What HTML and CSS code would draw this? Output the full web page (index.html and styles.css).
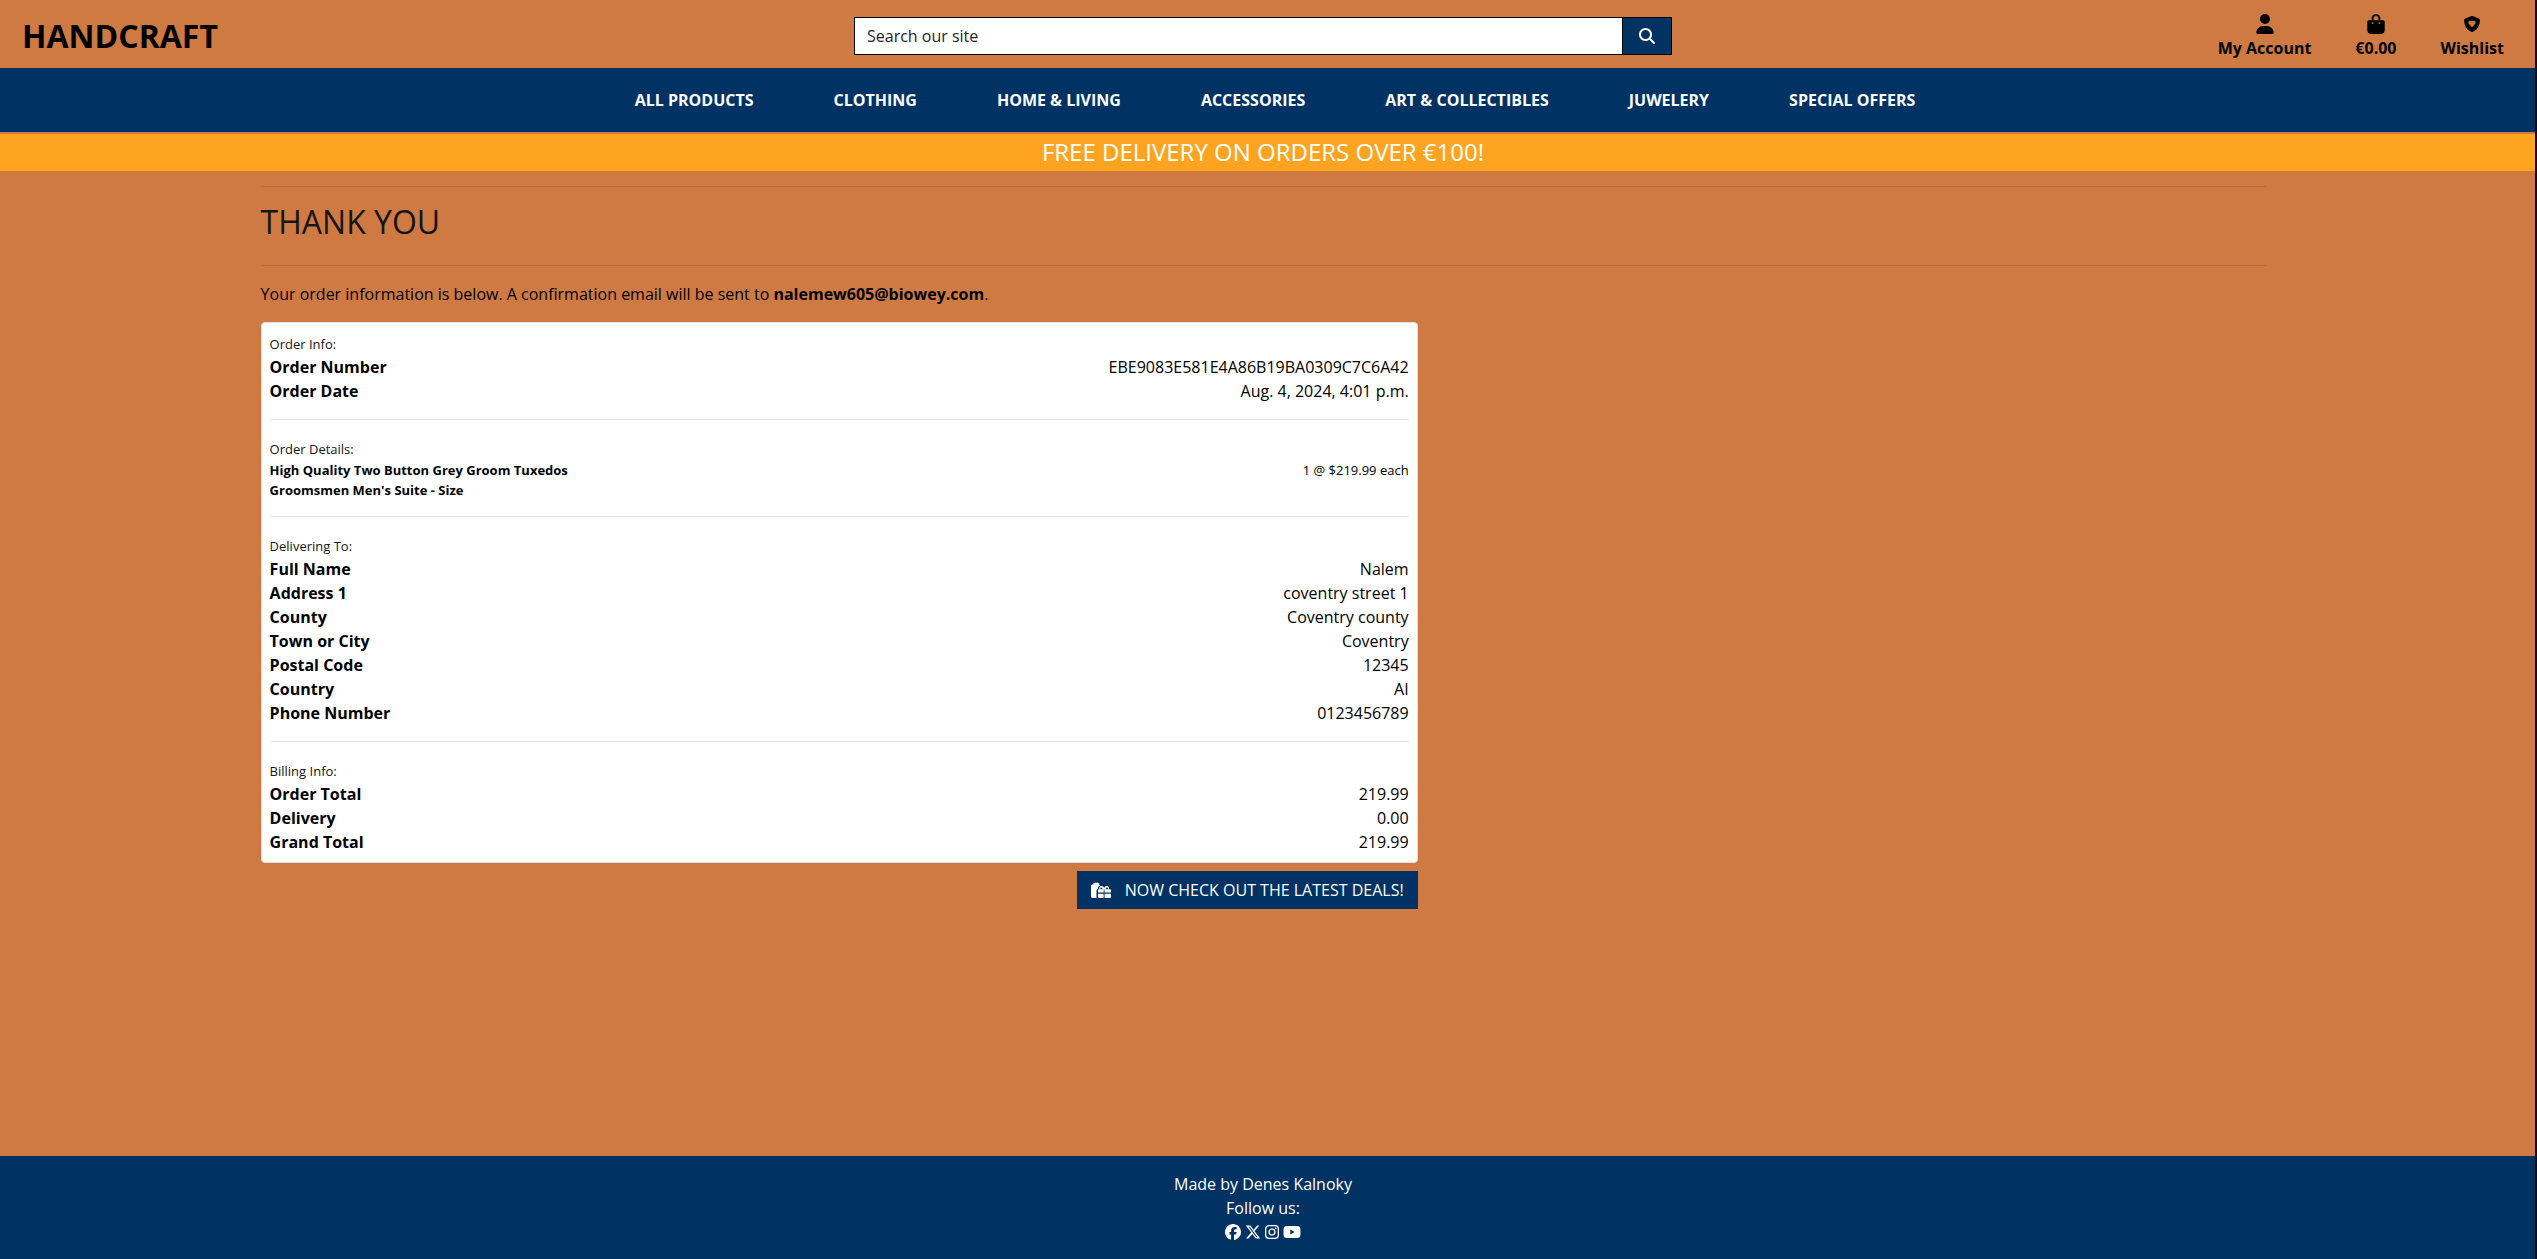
FILE: index.html
```html
<!DOCTYPE html>
<html lang="en">
<head>
<meta charset="utf-8">
<meta name="viewport" content="width=device-width, initial-scale=1">
<title>Handcraft - Thank you</title>
<link rel="stylesheet" href="styles.css">
</head>
<body>
<header class="topbar">
  <a class="brand" href="#">HANDCRAFT</a>
  <form class="search" role="search">
    <input class="search-input" type="search" placeholder="Search our site" aria-label="Search our site">
    <button class="search-button" type="submit" aria-label="Search">
      <svg class="icon" viewBox="0 0 512 512" width="16" height="16"><path d="M416 208c0 45.900-14.900 88.300-40 122.700L502.600 457.400c12.500 12.500 12.500 32.800 0 45.300s-32.800 12.500-45.300 0L330.700 376c-34.400 25.200-76.800 40-122.700 40C93.100 416 0 322.900 0 208S93.100 0 208 0S416 93.100 416 208zM208 352a144 144 0 1 0 0-288 144 144 0 1 0 0 288z"/></svg>
    </button>
  </form>
  <ul class="account">
    <li><a class="account-link" href="#">
      <svg class="icon" viewBox="0 0 448 512" width="18" height="20"><path d="M224 256A128 128 0 1 0 224 0a128 128 0 1 0 0 256zm-45.700 48C79.800 304 0 383.800 0 482.300C0 498.700 13.300 512 29.700 512H418.300c16.400 0 29.700-13.300 29.700-29.700C448 383.800 368.200 304 269.700 304H178.300z"/></svg>
      <span>My Account</span></a></li>
    <li><a class="account-link" href="#">
      <svg class="icon" viewBox="0 0 448 512" width="18" height="20"><path d="M160 112c0-35.300 28.700-64 64-64s64 28.700 64 64v48H160V112zm-48 48H48c-26.500 0-48 21.500-48 48V416c0 53 43 96 96 96H352c53 0 96-43 96-96V208c0-26.500-21.500-48-48-48H336V112C336 50.100 285.900 0 224 0S112 50.100 112 112v48zm24 48a24 24 0 1 1 0 48 24 24 0 1 1 0-48zm152 24a24 24 0 1 1 48 0 24 24 0 1 1 -48 0z"/></svg>
      <span>€0.00</span></a></li>
    <li><a class="account-link" href="#">
      <svg class="icon" viewBox="0 0 20 20" width="20" height="20"><path fill-rule="evenodd" d="M10 2c.4 0 .7.100 1 .3l5.700 2.200c.7.300 1.200.9 1.200 1.700-.1 4.500-2 9.300-6.900 11.600-.6.300-1.400.3-2 0C4.100 15.500 2.200 10.700 2.100 6.200c0-.8.500-1.400 1.200-1.700L9 2.300c.3-.2.600-.3 1-.3zM10 13.200l3-3.100c.9-.9.800-2.400-.2-3.100-.8-.6-1.900-.4-2.500.3l-.3.300-.3-.3C9.100 6.600 8 6.400 7.200 7c-1 .7-1.100 2.200-.2 3.100z"/></svg>
      <span>Wishlist</span></a></li>
  </ul>
</header>

<nav class="menu" aria-label="Categories">
  <a href="#">ALL PRODUCTS</a>
  <a href="#">CLOTHING</a>
  <a href="#">HOME &amp; LIVING</a>
  <a href="#">ACCESSORIES</a>
  <a href="#">ART &amp; COLLECTIBLES</a>
  <a href="#">JUWELERY</a>
  <a href="#">SPECIAL OFFERS</a>
</nav>

<p class="banner">FREE DELIVERY ON ORDERS OVER €100!</p>

<main class="page">
  <div class="container">
    <h1 class="title">THANK YOU</h1>
    <p class="intro">Your order information is below. A confirmation email will be sent to <strong>nalemew605@biowey.com</strong>.</p>

    <div class="order">
      <div class="card">
        <section class="group">
          <h2 class="group-title">Order Info:</h2>
          <dl>
            <div class="row"><dt>Order Number</dt><dd>EBE9083E581E4A86B19BA0309C7C6A42</dd></div>
            <div class="row"><dt>Order Date</dt><dd>Aug. 4, 2024, 4:01 p.m.</dd></div>
          </dl>
        </section>
        <section class="group">
          <h2 class="group-title">Order Details:</h2>
          <dl>
            <div class="row row-item"><dt>High Quality Two Button Grey Groom Tuxedos Groomsmen Men's Suite - Size</dt><dd>1 @ $219.99 each</dd></div>
          </dl>
        </section>
        <section class="group">
          <h2 class="group-title">Delivering To:</h2>
          <dl>
            <div class="row"><dt>Full Name</dt><dd>Nalem</dd></div>
            <div class="row"><dt>Address 1</dt><dd>coventry street 1</dd></div>
            <div class="row"><dt>County</dt><dd>Coventry county</dd></div>
            <div class="row"><dt>Town or City</dt><dd>Coventry</dd></div>
            <div class="row"><dt>Postal Code</dt><dd>12345</dd></div>
            <div class="row"><dt>Country</dt><dd>AI</dd></div>
            <div class="row"><dt>Phone Number</dt><dd>0123456789</dd></div>
          </dl>
        </section>
        <section class="group">
          <h2 class="group-title">Billing Info:</h2>
          <dl>
            <div class="row"><dt>Order Total</dt><dd>219.99</dd></div>
            <div class="row"><dt>Delivery</dt><dd>0.00</dd></div>
            <div class="row"><dt>Grand Total</dt><dd>219.99</dd></div>
          </dl>
        </section>
      </div>
      <a class="deals" href="#">
        <svg class="icon" viewBox="0 0 20 16" width="20" height="16"><path d="M2.200.9 3.500 1.300 4.300.2 5.200.9 6.300.2 7 1.300 8.300.9 8 2.500C8.600 2.700 9 3 9.200 3.500 7.500 4 6.600 5.300 6.900 7 6 7.300 5.500 8 5.500 9v6.500c0 .2 0 .4.100.5H1.500C.7 16 0 15.300 0 14.500V4c0-.8.600-1.500 1.400-1.600L2.600 2.400z"/><path fill-rule="evenodd" d="M7 10.600V8.500c0-.7.500-1.200 1.200-1.200h.2C7.700 5.500 8.800 3.900 10.400 3.900c.9 0 1.700.5 2.200 1.200l.5.700.5-.7c.5-.7 1.300-1.200 2.200-1.200 1.600 0 2.700 1.600 2 3.400h1c.7 0 1.200.5 1.200 1.200v2.100h-6.500V7.300h-.8v3.300zM9.900 7.300h1.900l-.9-1.400c-.4-.6-1.600-.4-1.600.5 0 .5.300.9.600.9zM14.400 7.300h1.900c.3 0 .6-.4.600-.9 0-.9-1.200-1.100-1.600-.5z"/><path d="M7 11.700h5.600V16H8.300C7.600 16 7 15.400 7 14.700zM13.600 11.700H20v3c0 .7-.6 1.300-1.300 1.300h-5.100z"/></svg>
        <span>NOW CHECK OUT THE LATEST DEALS!</span>
      </a>
    </div>
  </div>
</main>

<footer class="footer">
  <p>Made by Denes Kalnoky</p>
  <p>Follow us:</p>
  <div class="social">
    <a href="#" aria-label="Facebook"><svg class="icon" viewBox="0 0 512 512" width="16" height="16"><path d="M512 256C512 114.600 397.400 0 256 0S0 114.600 0 256C0 376 82.700 476.800 194.200 504.500V334.200H141.400V256h52.800V222.300c0-87.100 39.400-127.500 125-127.500c16.200 0 44.200 3.200 55.700 6.400V172c-6-.6-16.500-1-29.600-1c-42 0-58.200 15.900-58.200 57.200V256h83.600l-14.400 78.200H287V510.100C413.800 494.800 512 386.900 512 256h0z"/></svg></a>
    <a href="#" aria-label="X"><svg class="icon" viewBox="0 0 512 512" width="16" height="16"><path d="M389.200 48h70.600L305.600 224.200 487 464H345L233.700 318.600 106.500 464H35.800L200.700 275.500 26.800 48H172.400L272.900 180.900 389.200 48zM364.400 421.800h39.100L151.100 88h-42L364.400 421.800z"/></svg></a>
    <a href="#" aria-label="Instagram"><svg class="icon" viewBox="0 0 14 16" width="14" height="16"><rect x=".65" y="1.650" width="12.700" height="12.700" rx="3.400" fill="none" stroke="currentColor" stroke-width="1.300"/><circle cx="7" cy="8" r="2.950" fill="none" stroke="currentColor" stroke-width="1.300"/><circle cx="10.700" cy="4.300" r=".85"/></svg></a>
    <a href="#" aria-label="YouTube"><svg class="icon" viewBox="0 0 576 512" width="18" height="16"><path d="M549.655 124.083c-6.281-23.650-24.787-42.276-48.284-48.597C458.781 64 288 64 288 64S117.220 64 74.629 75.486c-23.497 6.322-42.003 24.947-48.284 48.597-11.412 42.867-11.412 132.305-11.412 132.305s0 89.438 11.412 132.305c6.281 23.650 24.787 41.500 48.284 47.821C117.220 448 288 448 288 448s170.780 0 213.371-11.486c23.497-6.321 42.003-24.171 48.284-47.821 11.412-42.867 11.412-132.305 11.412-132.305s0-89.438-11.412-132.305zm-317.510 213.508V175.185l142.739 81.205-142.739 81.201z"/></svg></a>
  </div>
</footer>
</body>
</html>
```
FILE: styles.css
```css
:root {
  --clay: #cf7a43;
  --navy: #003263;
  --amber: #ffa421;
  --ink: #151515;
  --edge: 9px; /* space kept free at the right of every band */
}

* {
  box-sizing: border-box;
}

body {
  margin: 0;
  min-height: 100vh;
  display: flex;
  flex-direction: column;
  background: var(--clay);
  border-right: 2px solid #0c0a09;
  color: #000;
  font: 16px/24px "Open Sans", sans-serif;
}

p, h1, h2, dl, dd, ul {
  margin: 0;
}

a {
  color: inherit;
  text-decoration: none;
}

.icon {
  display: block;
  fill: currentColor;
}

/* Header */
.topbar {
  display: grid;
  grid-template-columns: 1fr 1fr 1fr;
  align-items: center;
  padding: 12px var(--edge) 8px 0;
}

.brand {
  padding-left: 22px;
  font-size: 32px;
  line-height: 48px;
  font-weight: 700;
}

.search {
  display: flex;
  height: 38px;
  margin: 0 12px;
}

.search-input {
  flex: 1;
  min-width: 0;
  padding: 0 12px;
  border: 1px solid #000;
  border-radius: 0;
  background: #fff;
  color: var(--ink);
  font: inherit;
  appearance: none;
}

.search-input::placeholder {
  color: #212529;
  opacity: 1;
}

.search-button {
  display: grid;
  place-items: center;
  width: 49px;
  padding: 0;
  border: 1px solid #000;
  border-left: 0;
  background: var(--navy);
  color: #fff;
}

.account {
  display: flex;
  align-self: end;
  justify-content: flex-end;
  gap: 44px;
  padding: 0 22px 0 0;
  list-style: none;
}

.account-link {
  display: flex;
  flex-direction: column;
  align-items: center;
  gap: 2px;
  font-weight: 700;
}

.menu {
  display: flex;
  justify-content: center;
  gap: 80px;
  padding: 20px var(--edge) 20px 24px;
  background: var(--navy);
  color: #fff;
  font-weight: 700;
}

.banner {
  margin-top: 2px;
  padding: 3px var(--edge) 5px 0;
  background: var(--amber);
  color: #fff;
  font-size: 24px;
  line-height: 29px;
  font-weight: 500;
  text-align: center;
}

/* Order confirmation */
.page {
  flex: 1;
  padding: 15px var(--edge) 24px 0;
}

.container {
  width: 80%;
  margin: 0 auto;
  padding: 0 7px 0 8px;
}

.title {
  padding: 16px 0 24px;
  border: solid #b86e3c;
  border-width: 1px 0;
  color: var(--ink);
  font-size: 32px;
  line-height: 38px;
  font-weight: 500;
}

.intro {
  padding: 16px 0;
}

.order {
  display: flex;
  flex-direction: column;
  align-items: flex-end;
  gap: 8px;
  width: calc(100% * 7 / 12 - 13px);
}

.card {
  width: 100%;
  padding: 8px;
  border: 1px solid #dee2e6;
  border-radius: 4px;
  background: #fff;
}

.group + .group {
  margin-top: 16px;
  padding-top: 16px;
  border-top: 1px solid #e2e2e2;
}

.group-title {
  padding-top: 2px;
  font-size: 13px;
  line-height: 22px;
  font-weight: 400;
  color: var(--ink);
}

.row {
  display: flex;
  justify-content: space-between;
}

.row dt {
  font-weight: 700;
}

.row-item {
  font-size: 13px;
  line-height: 20px;
}

.row-item dt {
  width: 33%;
}

.deals {
  display: flex;
  align-items: center;
  gap: 14px;
  padding: 7px 14px;
  background: var(--navy);
  color: #fff;
}

/* Footer */
.footer {
  padding: 16px var(--edge) 15px 0;
  background: var(--navy);
  color: #fff;
  text-align: center;
}

.social {
  display: flex;
  align-items: center;
  justify-content: center;
  gap: 4px;
  height: 24px;
}
```
